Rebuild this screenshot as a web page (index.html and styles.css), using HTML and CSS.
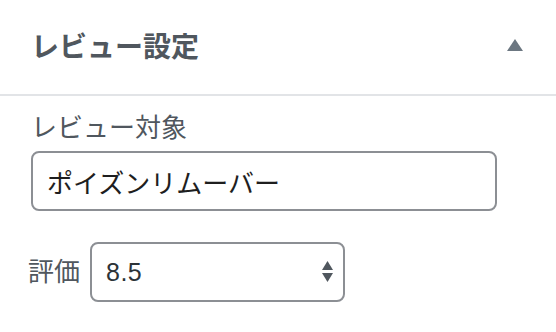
FILE: index.html
```html
<!DOCTYPE html>
<html lang="ja">
<head>
<meta charset="utf-8">
<link rel="stylesheet" href="styles.css">
</head>
<body>
<div class="panel">
  <div class="panel-header">
    <h2 class="panel-title">レビュー設定</h2>
    <svg class="toggle" width="16" height="12" viewBox="0 0 16 12"><polygon points="8,0 16,12 0,12" fill="#6c7781"/></svg>
  </div>
  <div class="panel-body">
    <label class="field-label">レビュー対象</label>
    <div class="text-input">ポイズンリムーバー</div>
    <div class="rating-row">
      <span class="rating-label">評価</span>
      <div class="select-box">
        <span class="select-value">8.5</span>
        <svg class="select-arrows" width="11" height="22" viewBox="0 0 11 22"><polygon points="5.5,0 11,9 0,9" fill="#50575e"/><polygon points="0,12 11,12 5.5,21" fill="#50575e"/></svg>
      </div>
    </div>
  </div>
</div>
</body>
</html>
```
FILE: styles.css
```css
html, body {
  margin: 0;
  padding: 0;
  background: #ffffff;
}
body {
  font-family: "Liberation Sans", "Noto Sans CJK JP", sans-serif;
  width: 556px;
  height: 332px;
  overflow: hidden;
}
.panel-header {
  height: 96px;
  display: flex;
  align-items: center;
  justify-content: space-between;
  padding: 0 33px 0 31px;
  box-sizing: border-box;
  border-bottom: 2px solid #e2e4e7;
}
.panel-title {
  margin: 0;
  font-size: 28px;
  font-weight: 700;
  color: #50575e;
  line-height: 1;
  padding-top: 1px;
}
.toggle {
  display: block;
  margin-top: -4px;
}
.panel-body {
  padding: 0 59px 0 31px;
}
.field-label {
  display: block;
  margin-top: 19px;
  font-size: 26px;
  line-height: 26px;
  color: #50575e;
}
.text-input {
  margin-top: 10px;
  height: 60px;
  box-sizing: border-box;
  border: 2px solid #8c8f94;
  border-radius: 8px;
  padding: 0 14px;
  display: flex;
  align-items: center;
  font-size: 26px;
  color: #1e1e1e;
}
.rating-row {
  margin-top: 31px;
  display: flex;
  align-items: center;
  gap: 10px;
}
.rating-label {
  margin-left: -3px;
  font-size: 26px;
  color: #50575e;
  line-height: 1;
}
.select-box {
  width: 255px;
  height: 60px;
  box-sizing: border-box;
  border: 2px solid #8c8f94;
  border-radius: 8px;
  display: flex;
  align-items: center;
  justify-content: space-between;
  padding: 0 10px 0 14px;
}
.select-value {
  font-size: 25px;
  color: #2c3338;
  letter-spacing: 0.5px;
}
.select-arrows {
  display: block;
}
```
